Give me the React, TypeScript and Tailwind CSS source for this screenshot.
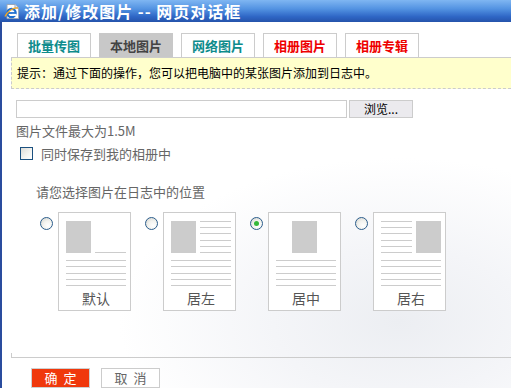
import React from 'react';

const LINE = 'h-px bg-[#cccccc]';

function IeIcon() {
  return (
    <svg width="17" height="17" viewBox="0 0 17 17">
      <path d="M3 1.5h8l3.5 3.5v10.5H3z" fill="#ffffff" stroke="#9aa7b8" />
      <path d="M11 1.5v3.5h3.5" fill="#e6ebf2" stroke="#9aa7b8" />
      <circle cx="7.5" cy="10" r="4.2" fill="none" stroke="#1d6fd0" strokeWidth="2.2" />
      <path d="M4 10h7.5" stroke="#1d6fd0" strokeWidth="1.8" />
      <rect x="8" y="10.9" width="4.5" height="2" fill="#ffffff" />
      <path d="M1 13.5c2-5 8-9 13-8.5" fill="none" stroke="#f2a623" strokeWidth="1.3" />
    </svg>
  );
}

function Radio({ checked }: { checked?: boolean }) {
  return (
    <div className="mt-[5px] w-[13px] h-[13px] rounded-full border border-[#2b5d8c] bg-[radial-gradient(circle_at_65%_70%,#ffffff_0%,#f3f3ef_45%,#cfd0cb_100%)] flex items-center justify-center shrink-0">
      {checked && <div className="w-[5px] h-[5px] rounded-full bg-[#35b83a]" />}
    </div>
  );
}

function Lines({ tops }: { tops: number[] }) {
  return (
    <>
      {tops.map((t, i) => (
        <div key={i} className={LINE} style={{ marginTop: t }} />
      ))}
    </>
  );
}

function PosCard({ kind, label, checked }: { kind: 'default' | 'left' | 'center' | 'right'; label: string; checked?: boolean }) {
  const img = <div className="w-[25px] h-[32px] bg-[#cccccc] shrink-0" />;
  const side = (
    <div className="flex flex-col w-[31px]">
      {[0, 5, 5, 6, 5, 5].map((m, i) => (
        <div key={i} className={LINE} style={{ marginTop: m }} />
      ))}
    </div>
  );
  let top: React.ReactNode;
  if (kind === 'default') {
    top = (
      <div className="h-[32px] flex items-end justify-between">
        {img}
        <div className={`${LINE} w-[31px]`} />
      </div>
    );
  } else if (kind === 'left') {
    top = (
      <div className="h-[32px] flex justify-between">
        {img}
        {side}
      </div>
    );
  } else if (kind === 'center') {
    top = <div className="h-[32px] flex justify-center pr-[3px]">{img}</div>;
  } else {
    top = (
      <div className="h-[32px] flex justify-between">
        {side}
        {img}
      </div>
    );
  }
  return (
    <div className="flex items-start gap-[5px]">
      <Radio checked={checked} />
      <div className="w-[73px] h-[99px] border border-[#cccccc] bg-white flex flex-col pl-[7px] pr-[4px] pt-[8px]">
        {top}
        <Lines tops={[7, 5, 6, 5, 5]} />
        <div className="mt-[4px] leading-[16px] text-[14px] text-center text-[#555555]">{label}</div>
      </div>
    </div>
  );
}

export default function App() {
  const tabs = [
    { t: '批量传图', c: 'text-[#0e8c8c]' },
    { t: '本地图片', c: 'text-[#444444] bg-[#c8c8c8] border-[#c8c8c8]', active: true },
    { t: '网络图片', c: 'text-[#0e8c8c]' },
    { t: '相册图片', c: 'text-[#ee0000]' },
    { t: '相册专辑', c: 'text-[#ee0000]' },
  ];
  return (
    <div className="w-[511px] h-[388px] overflow-hidden flex flex-col bg-white font-['Noto_Sans_CJK_SC','Noto_Sans',sans-serif]">
      <div className="h-[22px] shrink-0 flex items-center gap-[3px] pl-[4px] bg-[linear-gradient(to_bottom,#7fb6f2_0%,#5393e2_40%,#2f67c6_75%,#2553ab_100%)]">
        <IeIcon />
        <span className="text-white font-bold text-[16px] leading-[22px] tracking-[1px]">添加/修改图片 -- 网页对话框</span>
      </div>
      <div className="flex flex-1">
        <div className="w-[2px] bg-[#2a4c9e] shrink-0" />
        <div className="flex-1 flex flex-col bg-[radial-gradient(ellipse_55%_45%_at_78%_82%,#eceef2_0%,#f4f5f8_45%,#ffffff_100%)]">
          <div className="mt-[11px] ml-[9px] pl-[6px] flex gap-[8px] border-b border-[#cccccc]">
            {tabs.map((tab) => (
              <div
                key={tab.t}
                className={`w-[74px] h-[24px] flex items-center justify-center text-[13px] font-bold border border-b-0 ${tab.active ? '' : 'border-[#cccccc] bg-white'} ${tab.c}`}
              >
                {tab.t}
              </div>
            ))}
          </div>
          <div className="ml-[9px] h-[31px] bg-[#ffffcc] border-l border-b border-dashed border-[#cccccc] pl-[5px] flex items-center text-[12px] text-black">
            提示：通过下面的操作，您可以把电脑中的某张图片添加到日志中。
          </div>
          <div className="mt-[11px] ml-[14px] flex gap-[2px]">
            <div className="w-[331px] h-[18px] border border-[#cccccc] bg-white" />
            <div className="w-[64px] h-[18px] border border-[#cccccc] bg-[#ebeaee] flex items-center justify-center text-[12px] text-black leading-none">
              浏览...
            </div>
          </div>
          <div className="mt-[5px] ml-[14px] text-[13px] leading-[16px] text-[#666666]">图片文件最大为1.5M</div>
          <div className="mt-[8px] ml-[18px] flex items-center gap-[8px]">
            <div className="w-[13px] h-[13px] border border-[#1c5180] bg-[linear-gradient(135deg,#dcdcd7_0%,#f5f5f2_60%,#ffffff_100%)]" />
            <span className="text-[13px] leading-[13px] text-[#666666]">同时保存到我的相册中</span>
          </div>
          <div className="mt-[24px] ml-[34px] text-[13px] leading-[16px] text-[#666666]">请您选择图片在日志中的位置</div>
          <div className="mt-[12px] ml-[38px] flex gap-[14px]">
            <PosCard kind="default" label="默认" />
            <PosCard kind="left" label="居左" />
            <PosCard kind="center" label="居中" checked />
            <PosCard kind="right" label="居右" />
          </div>
          <div className="mt-[42px] ml-[9px] h-[5px] border-l border-b border-[#cccccc]" />
          <div className="mt-[10px] ml-[29px] flex gap-[11px]">
            <div className="w-[59px] h-[20px] bg-[#f0380c] border border-[#d0d0d0] flex items-center justify-center text-white text-[13px] tracking-[6px] pl-[6px]">
              确定
            </div>
            <div className="w-[59px] h-[20px] bg-white border border-[#cccccc] flex items-center justify-center text-[#666666] text-[13px] tracking-[6px] pl-[6px]">
              取消
            </div>
          </div>
        </div>
      </div>
    </div>
  );
}
